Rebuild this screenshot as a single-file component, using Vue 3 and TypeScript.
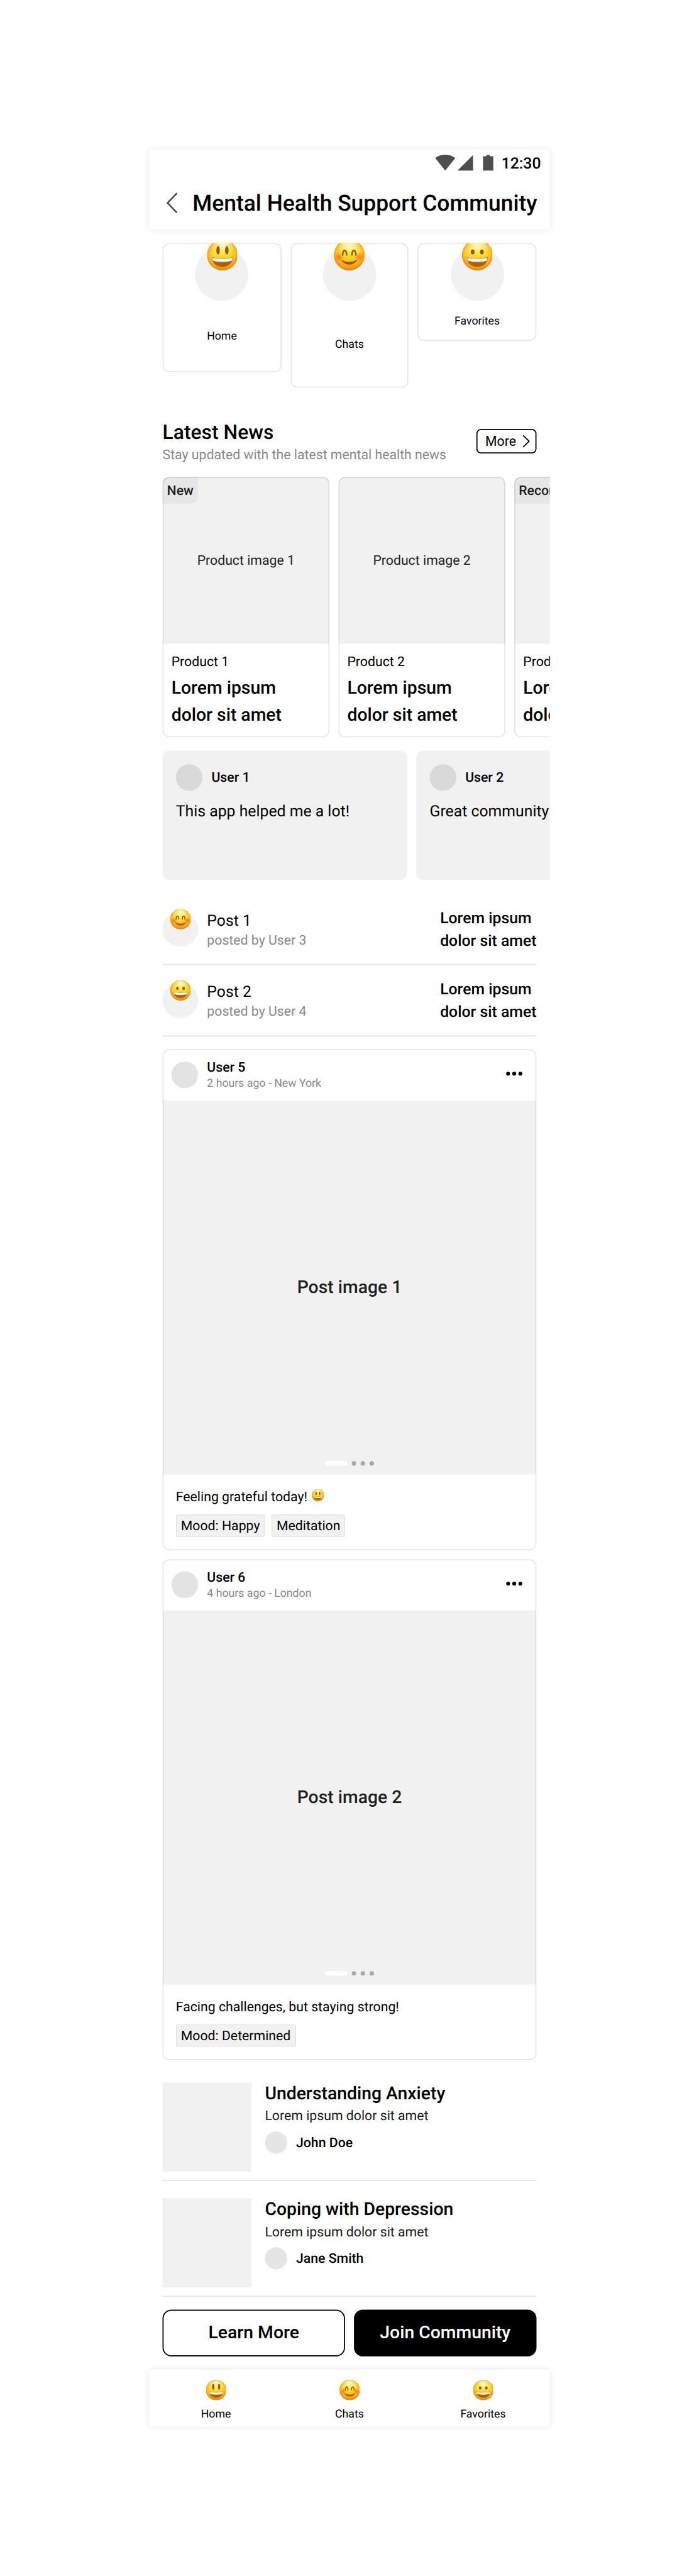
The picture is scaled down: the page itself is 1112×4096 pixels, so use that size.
<script setup lang="ts">
interface Tab { label: string; face: string; height: number }
interface Product { name: string; image: string; badge?: string }
interface Post { user: string; meta: string; image: string; text: string; face?: string; tags: string[] }

const tabs: Tab[] = [
  { label: 'Home', face: 'smiley', height: 116 },
  { label: 'Chats', face: 'blush', height: 130 },
  { label: 'Favorites', face: 'grin', height: 88 },
]
const products: Product[] = [
  { name: 'Product 1', image: 'Product image 1', badge: 'New' },
  { name: 'Product 2', image: 'Product image 2' },
  { name: 'Product 3', image: '', badge: 'Recommended' },
]
const reviews = [
  { user: 'User 1', text: 'This app helped me a lot!' },
  { user: 'User 2', text: 'Great community' },
]
const threads = [
  { title: 'Post 1', by: 'posted by User 3', face: 'blush' },
  { title: 'Post 2', by: 'posted by User 4', face: 'grin' },
]
const posts: Post[] = [
  { user: 'User 5', meta: '2 hours ago - New York', image: 'Post image 1', text: 'Feeling grateful today!', face: 'smiley', tags: ['Mood: Happy', 'Meditation'] },
  { user: 'User 6', meta: '4 hours ago - London', image: 'Post image 2', text: 'Facing challenges, but staying strong!', tags: ['Mood: Determined'] },
]
const articles = [
  { title: 'Understanding Anxiety', author: 'John Doe' },
  { title: 'Coping with Depression', author: 'Jane Smith' },
]
</script>

<template>
  <div class="screen">
  <div class="stage">
    <svg class="defs" width="0" height="0" aria-hidden="true">
      <defs>
        <linearGradient id="skin" x1="0" y1="0" x2="0" y2="1">
          <stop offset="0" stop-color="#fff3a6" />
          <stop offset="0.2" stop-color="#ffec66" />
          <stop offset="0.5" stop-color="#ffdc2c" />
          <stop offset="0.78" stop-color="#fdb51a" />
          <stop offset="1" stop-color="#f5940f" />
        </linearGradient>
        <radialGradient id="rim" cx="0.5" cy="0.49" r="0.51">
          <stop offset="0.5" stop-color="#f99a08" stop-opacity="0" />
          <stop offset="0.84" stop-color="#f99208" stop-opacity="0.4" />
          <stop offset="0.95" stop-color="#f08200" stop-opacity="0.7" />
          <stop offset="1" stop-color="#e07000" stop-opacity="0.9" />
        </radialGradient>
        <radialGradient id="gloss" cx="0.5" cy="0.14" r="0.4">
          <stop offset="0" stop-color="#fffbd8" stop-opacity="0.9" />
          <stop offset="1" stop-color="#fff6a0" stop-opacity="0" />
        </radialGradient>
        <radialGradient id="cheek">
          <stop offset="0" stop-color="#ff5a1f" stop-opacity="0.75" />
          <stop offset="1" stop-color="#ff6a1f" stop-opacity="0" />
        </radialGradient>
        <linearGradient id="teeth" x1="0" y1="0" x2="0" y2="1">
          <stop offset="0" stop-color="#cfcfd4" />
          <stop offset="0.5" stop-color="#ffffff" />
          <stop offset="1" stop-color="#dcdce2" />
        </linearGradient>
        <g id="head">
          <circle cx="50" cy="50" r="50" fill="url(#skin)" />
          <circle cx="50" cy="50" r="50" fill="url(#rim)" />
          <circle cx="50" cy="50" r="48" fill="url(#gloss)" />
        </g>
        <g id="laugh">
          <path d="M16 57 Q50 65 84 57 C84 76 69 88.500 50 88.500 C31 88.500 16 76 16 57Z" fill="#a66505" />
          <path d="M17 58 Q50 66 83 58 Q83 64 80.500 69 Q50 77 19.500 69 Q17 64 17 58Z" fill="url(#teeth)" />
        </g>
        <symbol id="smiley" viewBox="0 0 100 100">
          <use href="#head" />
          <ellipse cx="36" cy="34.500" rx="5.700" ry="13.800" fill="#93560a" />
          <ellipse cx="64.500" cy="34.500" rx="5.700" ry="13.800" fill="#93560a" />
          <use href="#laugh" />
        </symbol>
        <symbol id="grin" viewBox="0 0 100 100">
          <use href="#head" />
          <ellipse cx="35" cy="40" rx="6.200" ry="7.800" fill="#93560a" />
          <ellipse cx="65" cy="40" rx="6.200" ry="7.800" fill="#93560a" />
          <use href="#laugh" />
        </symbol>
        <symbol id="blush" viewBox="0 0 100 100">
          <use href="#head" />
          <circle cx="17" cy="57" r="17" fill="url(#cheek)" />
          <circle cx="83" cy="57" r="17" fill="url(#cheek)" />
          <path d="M28.500 50 C29.500 30 40.500 30 41.500 50 M58.500 50 C59.500 30 70.500 30 71.500 50" fill="none" stroke="#93560a" stroke-width="5" stroke-linecap="round" />
          <path d="M25 67 Q50 81 75 67 Q66 80 50 80 Q34 80 25 67Z" fill="#93560a" stroke="#93560a" stroke-width="2" stroke-linejoin="round" />
        </symbol>
      </defs>
    </svg>

    <main class="phone">
      <header class="top">
        <div class="status">
          <svg class="signals" width="54" height="16" viewBox="0 0 54 16">
            <path d="M9 15 L0 3.700 C5 -0.300 13 -0.300 18 3.700Z M20 15 L34 1 V15Z M43 2.100 H46 V1 H49.200 V2.100 H52.200 V15 H43Z" fill="#4d4d4d" />
          </svg>
          <span class="clock">12:30</span>
        </div>
        <div class="bar">
          <svg width="12" height="20" viewBox="0 0 12 20">
            <path d="M9.500 1.700 L1.500 10 L9.500 18.300" fill="none" stroke="#4d4d4d" stroke-width="1.500" stroke-linecap="round" stroke-linejoin="round" />
          </svg>
          <h1>Mental Health Support Community</h1>
        </div>
      </header>

      <section class="tabs">
        <div v-for="t in tabs" :key="t.label" class="tab line" :style="{ height: t.height + 'px' }">
          <span class="tab-disc"></span>
          <span class="tab-label">{{ t.label }}</span>
          <svg class="tab-face"><use :href="'#' + t.face" /></svg>
        </div>
      </section>

      <section class="heading">
        <div>
          <h2>Latest News</h2>
          <p>Stay updated with the latest mental health news</p>
        </div>
        <button class="more" type="button">
          More
          <svg width="8" height="12" viewBox="0 0 8 12">
            <path d="M1.200 1 L6.400 6 L1.200 11" fill="none" stroke="#000" stroke-width="1" stroke-linecap="round" stroke-linejoin="round" />
          </svg>
        </button>
      </section>

      <section class="products">
        <article v-for="p in products" :key="p.name" class="product line">
          <div class="product-image">
            {{ p.image }}
            <span v-if="p.badge" class="badge">{{ p.badge }}</span>
          </div>
          <div class="product-info">
            <p>{{ p.name }}</p>
            <h3>Lorem ipsum<br />dolor sit amet</h3>
          </div>
        </article>
      </section>

      <section class="reviews">
        <article v-for="r in reviews" :key="r.user" class="review">
          <div class="review-user"><span class="disc"></span>{{ r.user }}</div>
          <p>{{ r.text }}</p>
        </article>
      </section>

      <section class="threads">
        <div v-for="t in threads" :key="t.title" class="thread rule">
          <div class="thread-disc"><svg><use :href="'#' + t.face" /></svg></div>
          <div class="thread-text">
            <h4>{{ t.title }}</h4>
            <p>{{ t.by }}</p>
          </div>
          <div class="thread-side">Lorem ipsum<br />dolor sit amet</div>
        </div>
      </section>

      <section class="posts">
        <article v-for="p in posts" :key="p.user" class="post line">
          <div class="post-head">
            <span class="disc"></span>
            <div class="post-user">
              <h4>{{ p.user }}</h4>
              <p>{{ p.meta }}</p>
            </div>
            <svg class="dots" width="24" height="24" viewBox="0 0 24 24">
              <circle cx="6.500" cy="12" r="1.750" /><circle cx="12" cy="12" r="1.750" /><circle cx="17.500" cy="12" r="1.750" />
            </svg>
          </div>
          <div class="post-image">
            {{ p.image }}
            <div class="pager"><b></b><i></i><i></i><i></i></div>
          </div>
          <div class="post-body">
            <p>{{ p.text }}<svg v-if="p.face"><use :href="'#' + p.face" /></svg></p>
            <div class="tags"><span v-for="g in p.tags" :key="g">{{ g }}</span></div>
          </div>
        </article>
      </section>

      <section class="articles">
        <article v-for="a in articles" :key="a.title" class="article rule">
          <div class="thumb"></div>
          <div>
            <h3>{{ a.title }}</h3>
            <p>Lorem ipsum dolor sit amet</p>
            <div class="author"><span></span>{{ a.author }}</div>
          </div>
        </article>
      </section>

      <section class="actions">
        <button type="button">Learn More</button>
        <button type="button" class="primary">Join Community</button>
      </section>

      <nav class="nav">
        <div v-for="t in tabs" :key="t.label">
          <svg><use :href="'#' + t.face" /></svg>
          <span>{{ t.label }}</span>
        </div>
      </nav>
    </main>
  </div>
  </div>
</template>

<style>
html,
body {
  margin: 0;
  background: #fff;
}
</style>

<style scoped>
.screen { width: 1112px; height: 4096px; overflow: hidden; }

/* Laid out at 628 wide, then scaled up to the window */
.stage {
  width: 628px;
  height: 2313px;
  padding-top: 134px;
  box-sizing: border-box;
  transform: translateY(0.44px) scale(1.7707, 1.7705);
  transform-origin: 0 0;
  font-family: Roboto, 'Liberation Sans', sans-serif;
  font-size: 12px;
  line-height: 16px;
  color: #000;
  text-rendering: geometricPrecision;
}
.stage * { box-sizing: border-box; }
.defs { position: absolute; }
.phone { width: 360px; margin: 0 auto; }
h1, h2, h3, h4, p { margin: 0; font-weight: 500; }
p { font-weight: 400; }
button { font: inherit; color: inherit; padding: 0; margin: 0; background: #fff; }
svg { flex: none; display: block; }

.line { position: relative; border-radius: 6px; overflow: hidden; }
.line::after {
  content: '';
  position: absolute;
  inset: 0;
  border: 1px solid rgba(0, 0, 0, 0.1);
  border-radius: inherit;
  pointer-events: none;
}
.rule { position: relative; }
.rule::after {
  content: '';
  position: absolute;
  left: 0;
  right: 0;
  bottom: 0;
  height: 1px;
  background: #e5e5e5;
  transform: translateY(0.5px);
}
.disc { width: 24px; height: 24px; border-radius: 50%; background: #e3e3e3; flex: none; }

.top { height: 72px; background: #fff; box-shadow: 0 0 6px rgba(0, 0, 0, 0.1); }
.status { height: 24px; display: flex; justify-content: flex-end; padding-right: 8px; }
.signals { margin: 4px 5.400px 0 0; }
.clock { font-size: 14px; font-weight: 500; line-height: 24px; padding-top: 1px; }
.bar { height: 48px; display: flex; align-items: center; padding-left: 15px; }
.bar h1 { font-size: 20px; line-height: 28px; margin-left: 12px; white-space: nowrap; }

.tabs { display: flex; gap: 8px; align-items: flex-start; height: 142px; padding: 12px 12px 0; }
.tab { flex: 1; display: flex; flex-direction: column; align-items: center; padding-top: 4px; }
.tab-disc { width: 48px; height: 48px; border-radius: 50%; background: #f1f1f1; flex: none; }
.tab-label { flex: 1; display: flex; align-items: center; padding-top: 2px; font-size: 10px; line-height: 12px; }
.tab-face { position: absolute; z-index: 1; left: 50%; top: -3px; width: 27.600px; height: 27.600px; margin-left: -13.800px; }

.heading { display: flex; justify-content: space-between; height: 80px; padding: 30px 12px 0; }
.heading h2 { font-size: 18px; line-height: 22px; }
.heading p { color: #888; }
.more {
  width: 54px; height: 22px; margin-top: 7px; border: 1px solid #000; border-radius: 4px;
  display: flex; align-items: center; justify-content: space-between; padding: 0 4px 0 7px; line-height: 20px;
}

.products { display: flex; gap: 8px; padding-left: 12px; overflow: hidden; height: 234px; }
.product { flex: none; width: 150px; height: 234px; }
.product-image {
  height: 150px; background: #f1f1f1; color: #1f1f1f;
  display: flex; align-items: center; justify-content: center; position: relative;
}
.badge {
  position: absolute; left: 0; top: 0; height: 24px; padding: 0 4px; line-height: 24px;
  background: #e6e6e6; font-weight: 500; border-bottom-right-radius: 6px;
}
.product-info { padding: 8px 8px 0; }
.product-info h3 { font-size: 16px; line-height: 24px; margin-top: 4px; }

.reviews { display: flex; gap: 8px; padding: 12px 0 0 12px; overflow: hidden; }
.review { flex: none; width: 220px; height: 116px; border-radius: 6px; background: #f1f1f1; padding: 12px; }
.review .disc { background: #d9d9d9; }
.review-user { display: flex; align-items: center; gap: 8px; font-weight: 500; }
.review p { font-size: 14px; line-height: 20px; margin-top: 9px; white-space: nowrap; }

.threads { padding: 12px 12px 0; }
.thread { height: 64px; display: flex; align-items: center; }
.thread-disc { position: relative; width: 32px; height: 32px; border-radius: 50%; background: #f1f1f1; }
.thread-disc svg { position: absolute; left: 6.800px; top: -1.800px; width: 18.400px; height: 18.400px; }
.thread-text { flex: 1; padding-left: 8px; }
.thread-text h4 { height: 20px; padding-top: 1px; font-size: 14px; line-height: 20px; font-weight: 400; }
.thread-text p { color: #888; }
.thread-side { padding-top: 2px; font-size: 14px; line-height: 20px; font-weight: 500; }

.posts { display: flex; flex-direction: column; gap: 8px; padding: 12px 12px 0; }
.post { height: 450px; }
.post-head { height: 46px; display: flex; align-items: center; padding: 0 8px; }
.post-user { flex: 1; padding-left: 8px; }
.post-user h4 { font-size: 12px; line-height: 16px; }
.post-user p { font-size: 10px; line-height: 12px; margin-top: 2px; color: #888; }
.dots { margin-top: -1.500px; }
.post-image {
  position: relative; height: 336px; background: #f1f1f1; color: #1f1f1f; font-size: 16px; font-weight: 500;
  display: flex; align-items: center; justify-content: center;
}
.pager { position: absolute; left: 0; right: 0; bottom: 8px; display: flex; justify-content: center; gap: 4px; }
.pager b { width: 20px; height: 4px; border-radius: 2px; background: #fff; }
.pager i { width: 4px; height: 4px; border-radius: 50%; background: #a9a9a9; }
.post-body { padding: 12px 12px 0; }
.post-body p { display: flex; align-items: center; }
.post-body p svg { width: 11.200px; height: 11.200px; margin: -2px 0 0 4px; }
.tags { display: flex; gap: 6px; margin-top: 8px; }
.tags span {
  height: 20px; line-height: 20px; padding: 0 4.500px; border-radius: 2px;
  background: #f1f1f1; box-shadow: inset 0 0 0 0.500px rgba(0, 0, 0, 0.1);
}

.articles { padding: 4px 12px 0; }
.article { height: 104px; padding-top: 16px; display: flex; gap: 12px; }
.thumb { width: 80px; height: 80px; background: #f1f1f1; }
.article h3 { font-size: 16px; line-height: 20px; }
.article p { color: #1a1a1a; margin-top: 2px; }
.author { display: flex; align-items: center; gap: 8px; font-weight: 500; height: 20px; margin-top: 6px; }
.author span { width: 20px; height: 20px; border-radius: 50%; background: #e5e5e5; }

.actions { display: flex; gap: 8px; padding: 12px; }
.actions button { flex: 1; height: 42px; border: 1px solid #000; border-radius: 8px; font-size: 16px; font-weight: 500; }
.actions .primary { background: #000; color: #fff; }

.nav { height: 51px; display: flex; background: #fff; box-shadow: 0 0 6px rgba(0, 0, 0, 0.1); }
.nav div { flex: 1; display: flex; flex-direction: column; align-items: center; padding-top: 9.300px; font-size: 10px; line-height: 12px; }
.nav svg { width: 18.400px; height: 18.400px; margin-bottom: 7.300px; }
</style>
